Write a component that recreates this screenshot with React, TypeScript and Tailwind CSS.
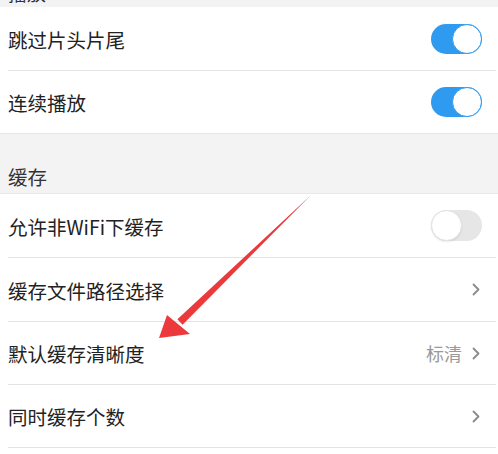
import React from "react";

const font = { fontFamily: '"Noto Sans CJK SC", "Noto Sans", sans-serif' };

function Toggle({ on }: { on: boolean }) {
  return on ? (
    <div className="w-[51px] h-[30px] rounded-full bg-[#2f9bf0] relative shrink-0">
      <div className="absolute right-0 top-0 w-[30px] h-[30px] rounded-full bg-white border-[1.5px] border-[#2f9bf0]" />
    </div>
  ) : (
    <div className="w-[51px] h-[31px] rounded-full bg-[#e6e6e6] relative shrink-0">
      <div className="absolute left-0 top-0 w-[31px] h-[31px] rounded-full bg-white border border-[#e2e2e2] shadow-[0_1px_2px_rgba(0,0,0,0.08)]" />
    </div>
  );
}

function Chevron() {
  return (
    <svg width="8" height="13" viewBox="0 0 8 13" className="shrink-0">
      <path d="M1.5 1.5 L6.5 6.5 L1.5 11.5" fill="none" stroke="#8a8a8a" strokeWidth="1.8" strokeLinecap="round" strokeLinejoin="round" />
    </svg>
  );
}

function Row({ label, h, right }: { label: string; h: string; right: React.ReactNode }) {
  return (
    <div className={`flex items-center justify-between bg-white pl-2 pr-4 ${h}`}>
      <span className="text-[19.5px] text-[#222] leading-none translate-y-[1px]">{label}</span>
      {right}
    </div>
  );
}

function Sep() {
  return (
    <div className="bg-white pl-2 pr-[2px]">
      <div className="h-px bg-[#e3e3e3]" />
    </div>
  );
}

export default function App() {
  return (
    <div className="relative w-[498px] h-[454px] overflow-hidden bg-white" style={font}>
      <div className="h-[7px] bg-[#f3f3f3] overflow-hidden flex flex-col justify-end pl-2 pb-[5px]">
        <span className="text-[19px] text-[#333] leading-none shrink-0">播放</span>
      </div>
      <Row label="跳过片头片尾" h="h-[63px]" right={<Toggle on />} />
      <Sep />
      <Row label="连续播放" h="h-[62px]" right={<Toggle on />} />
      <div className="h-px bg-[#e6e6e6]" />
      <div className="h-[59px] bg-[#f3f3f3] flex items-end pl-2 pb-[7px]">
        <span className="text-[19.5px] text-[#333] leading-none">缓存</span>
      </div>
      <div className="h-px bg-[#e8e8e8]" />
      <Row label="允许非WiFi下缓存" h="h-[63px]" right={<Toggle on={false} />} />
      <Sep />
      <Row label="缓存文件路径选择" h="h-[63px]" right={<div className="pr-[2px]"><Chevron /></div>} />
      <Sep />
      <Row
        label="默认缓存清晰度"
        h="h-[62px]"
        right={
          <div className="flex items-center gap-[10px] pr-[2px]">
            <span className="text-[18px] text-[#999] leading-none">标清</span>
            <Chevron />
          </div>
        }
      />
      <Sep />
      <Row label="同时缓存个数" h="h-[62px]" right={<div className="pr-[2px]"><Chevron /></div>} />
      <Sep />
      <div className="h-[6px] bg-white" />
      <svg className="absolute left-0 top-0 pointer-events-none" width="498" height="454" viewBox="0 0 498 454">
        <polygon points="311.5,194.5 310.5,195.5 177.4,319.2 182.6,324.8" fill="#ec3a3c" />
        <polygon points="159,338 167,315 190,334" fill="#ec3a3c" />
      </svg>
    </div>
  );
}
